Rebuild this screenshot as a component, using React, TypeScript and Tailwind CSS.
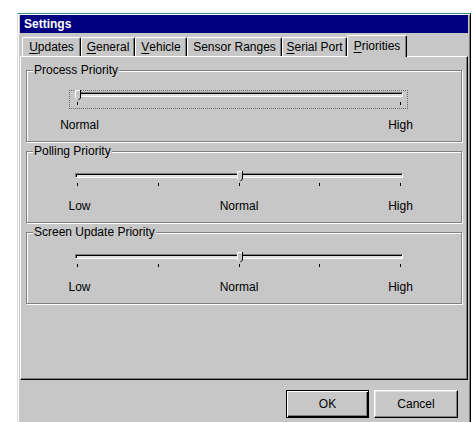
import React from "react";

type Scale = {
  title: string;
  ticks: number;
  labels: string[];
  value: number; // 0..1 along the channel
  focused?: boolean;
};

const scales: Scale[] = [
  { title: "Process Priority", ticks: 2, labels: ["Normal", "High"], value: 0, focused: true },
  { title: "Polling Priority", ticks: 5, labels: ["Low", "Normal", "High"], value: 0.5 },
  { title: "Screen Update Priority", ticks: 5, labels: ["Low", "Normal", "High"], value: 0.5 },
];

const tabs = [
  { label: "Updates", key: "U", w: "w-[59px]" },
  { label: "General", key: "G", w: "w-[54px]" },
  { label: "Vehicle", key: "V", w: "w-[52px]" },
  { label: "Sensor Ranges", key: "", w: "w-[95px]" },
  { label: "Serial Port", key: "S", w: "w-[65px]" },
  { label: "Priorities", key: "P", w: "w-[60px]", active: true },
];

function Mnemonic({ text, k }: { text: string; k: string }) {
  if (!k || !text.startsWith(k)) return <>{text}</>;
  return (
    <>
      <span className="underline underline-offset-[2px]">{k}</span>
      {text.slice(1)}
    </>
  );
}

function Thumb({ left }: { left: number }) {
  return (
    <svg
      className="absolute -top-[2px]"
      style={{ left }}
      width="6"
      height="11"
      viewBox="0 0 6 11"
    >
      <path d="M0 0H6V8L3 11L0 8Z" fill="#c7c7c7" />
      <path d="M0.5 8V0.5H5" stroke="#fff" fill="none" />
      <path d="M5.5 0V8L3 10.5" stroke="#000" fill="none" />
      <path d="M0.5 8L3 10.5" stroke="#dfdfdf" fill="none" />
    </svg>
  );
}

function Slider({ s }: { s: Scale }) {
  // channel runs 328px wide, ticks inset 2px from each end
  const left = Math.round(s.value * 323);

  return (
    <div className="relative ml-[48px] mt-[15px] w-[328px]">
      {s.focused && (
        <div className="absolute -left-[6px] -right-[5px] -top-[2px] h-[19px] border border-dotted border-[#6a6a6a]" />
      )}
      <div className="h-[5px] border border-t-[#808080] border-l-[#808080] border-b-white border-r-white bg-[#dfdfdf] shadow-[inset_1px_1px_0_#000]" />
      <Thumb left={left} />
      <div className="mt-[5px] flex justify-between px-[2px]">
        {Array.from({ length: s.ticks }).map((_, i) => (
          <span key={i} className="h-[3px] w-px bg-black" />
        ))}
      </div>
      <div className="mt-[13px] flex justify-between px-[2px] leading-[14px]">
        {s.labels.map((l) => (
          <div key={l} className="flex w-px justify-center first:translate-x-[2px]">
            <span className="whitespace-nowrap">{l}</span>
          </div>
        ))}
      </div>
    </div>
  );
}

function Group({ s }: { s: Scale }) {
  return (
    <fieldset className="h-[79px] w-[436px] border border-[#808080] shadow-[inset_1px_1px_0_#fff,1px_1px_0_#fff]">
      <legend className="ml-[6px] bg-[#c7c7c7] px-[1px] leading-[14px]">{s.title}</legend>
      <Slider s={s} />
    </fieldset>
  );
}

export default function App() {
  return (
    <div className="h-[422px] w-[472px] overflow-hidden bg-white pl-[17px] pt-[13px] font-['Liberation_Sans',Arial,sans-serif] text-[12px] text-black">
      <div className="flex h-[420px] w-[454px] flex-col border border-t-[#3b8e8e] border-l-[#dfdfdf] border-r-black border-b-black bg-[#c7c7c7] px-[2px] pt-[1px] shadow-[inset_1px_1px_0_#fff,inset_-1px_-1px_0_#808080]">
        {/* title bar */}
        <div className="flex h-[18px] items-center bg-[#000080] pl-[4px] text-[12px] font-bold text-white">
          Settings
        </div>

        {/* tab strip */}
        <div className="flex items-end pl-[2px] pt-[2px]">
          {tabs.map((t) =>
            t.active ? (
              <div
                key={t.label}
                className={`relative z-10 -mb-px flex h-[22px] items-center justify-center rounded-t-[2px] border-l border-r border-t border-l-white border-r-black border-t-white bg-[#c7c7c7] pb-[2px] shadow-[inset_-1px_0_0_#808080] ${t.w}`}
              >
                <Mnemonic text={t.label} k={t.key} />
              </div>
            ) : (
              <div
                key={t.label}
                className={`flex h-[19px] items-center justify-center rounded-t-[2px] border-l border-r border-t border-l-white border-r-black border-t-white shadow-[inset_-1px_0_0_#808080] ${t.w}`}
              >
                <Mnemonic text={t.label} k={t.key} />
              </div>
            )
          )}
        </div>

        {/* tab page */}
        <div className="flex h-[324px] flex-col gap-[2px] border border-t-white border-l-white border-r-black border-b-black pl-[5px] pr-[3px] pt-[6px] shadow-[inset_-1px_-1px_0_#808080]">
          {scales.map((s) => (
            <Group key={s.title} s={s} />
          ))}
        </div>

        {/* dialog buttons */}
        <div className="mt-[10px] flex justify-end gap-[5px] pr-[10px]">
          <button className="flex h-[28px] w-[83px] items-center justify-center border border-black shadow-[inset_1px_1px_0_#fff,inset_-1px_-1px_0_#000,inset_-2px_-2px_0_#808080]">
            OK
          </button>
          <button className="flex h-[28px] w-[84px] items-center justify-center border border-t-white border-l-white border-r-black border-b-black shadow-[inset_-1px_-1px_0_#808080,inset_1px_1px_0_#dfdfdf]">
            Cancel
          </button>
        </div>
      </div>
    </div>
  );
}
